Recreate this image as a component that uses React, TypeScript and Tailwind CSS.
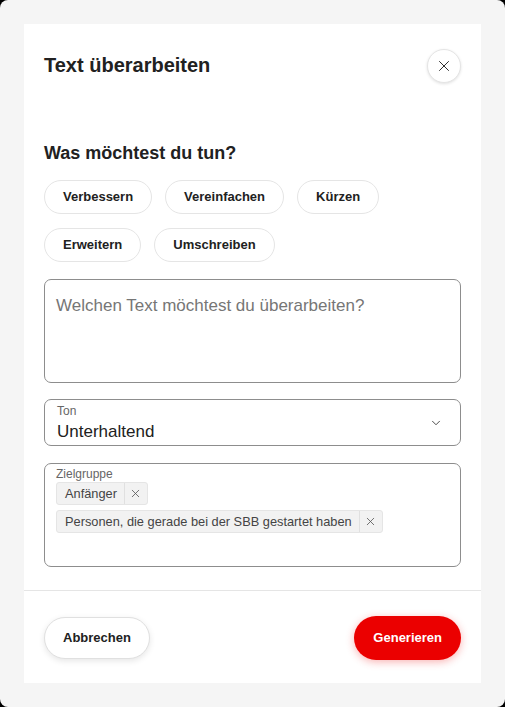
import { X, ChevronDown } from "lucide-react";

const ACTIONS_ROW1 = ["Verbessern", "Vereinfachen", "Kürzen"];
const ACTIONS_ROW2 = ["Erweitern", "Umschreiben"];
const AUDIENCE = ["Anfänger", "Personen, die gerade bei der SBB gestartet haben"];

const Chip = ({ label }: { label: string }) => (
  <button className="h-[34px] px-[18px] rounded-full border border-[#e5e5e5] bg-white text-[13px] font-bold text-[#212121]">
    {label}
  </button>
);

const Tag = ({ label }: { label: string }) => (
  <div className="flex h-[23px] items-stretch rounded-[3px] border border-[#e5e5e5] bg-[#f2f2f2] text-[12.8px] text-[#444]">
    <span className="flex items-center pl-[8px] pr-[7px]">{label}</span>
    <span className="flex w-[23px] items-center justify-center border-l border-[#e0e0e0]">
      <X size={13} strokeWidth={1.5} className="text-[#555]" />
    </span>
  </div>
);

export default function App() {
  return (
    <div className="min-h-screen bg-black" style={{ fontFamily: '"Liberation Sans", Arial, sans-serif' }}>
      <div className="flex h-[707px] w-[505px] items-start rounded-[8px] bg-[#f5f5f5] p-[24px]">
        <div className="flex h-[659px] w-full flex-col bg-white">
          <div className="flex items-start justify-between px-[20px] pt-[25px]">
            <h1 className="pt-[1px] text-[20px] font-bold text-[#212121]">Text überarbeiten</h1>
            <button className="flex h-[34px] w-[34px] items-center justify-center rounded-full border border-[#e5e5e5] bg-white shadow-[0_1px_3px_rgba(0,0,0,0.12)]">
              <X size={18} strokeWidth={1.25} className="text-[#212121]" />
            </button>
          </div>

          <div className="flex flex-1 flex-col px-[20px] pt-[57px]">
            <h2 className="text-[18px] font-bold text-[#212121]">Was möchtest du tun?</h2>
            <div className="mt-[13px] flex flex-col gap-[14px]">
              <div className="flex gap-[13px]">
                {ACTIONS_ROW1.map((a) => (
                  <Chip key={a} label={a} />
                ))}
              </div>
              <div className="flex gap-[13px]">
                {ACTIONS_ROW2.map((a) => (
                  <Chip key={a} label={a} />
                ))}
              </div>
            </div>

            <div className="mt-[17px] h-[104px] rounded-[7px] border border-[#8d8d8d] px-[11px] pt-[13px] text-[17px] text-[#767676]">
              Welchen Text möchtest du überarbeiten?
            </div>

            <div className="mt-[16px] flex h-[47px] items-center justify-between rounded-[7px] border border-[#8d8d8d] pl-[12px] pr-[17px]">
              <div className="flex flex-col">
                <span className="text-[12px] leading-[14px] text-[#666]">Ton</span>
                <span className="mt-[4px] text-[17px] leading-[19px] text-[#212121]">Unterhaltend</span>
              </div>
              <ChevronDown size={14} strokeWidth={1.5} className="text-[#333]" />
            </div>

            <div className="mt-[17px] h-[104px] rounded-[7px] border border-[#8d8d8d] px-[11px] pt-[3px]">
              <span className="block text-[12px] leading-[14px] text-[#666]">Zielgruppe</span>
              <div className="mt-[1px] flex flex-col items-start gap-[5px]">
                {AUDIENCE.map((t) => (
                  <Tag key={t} label={t} />
                ))}
              </div>
            </div>
          </div>

          <div className="flex h-[93px] items-center justify-between border-t border-[#e5e5e5] px-[20px] pt-[2px]">
            <button className="h-[42px] rounded-full border border-[#e0e0e0] bg-white px-[18px] text-[13px] font-bold text-[#212121] shadow-[0_2px_6px_rgba(0,0,0,0.1)]">
              Abbrechen
            </button>
            <button className="h-[44px] rounded-full bg-[#eb0000] px-[19px] text-[13px] font-bold text-white shadow-[0_2px_8px_rgba(235,0,0,0.3)]">
              Generieren
            </button>
          </div>
        </div>
      </div>
    </div>
  );
}
